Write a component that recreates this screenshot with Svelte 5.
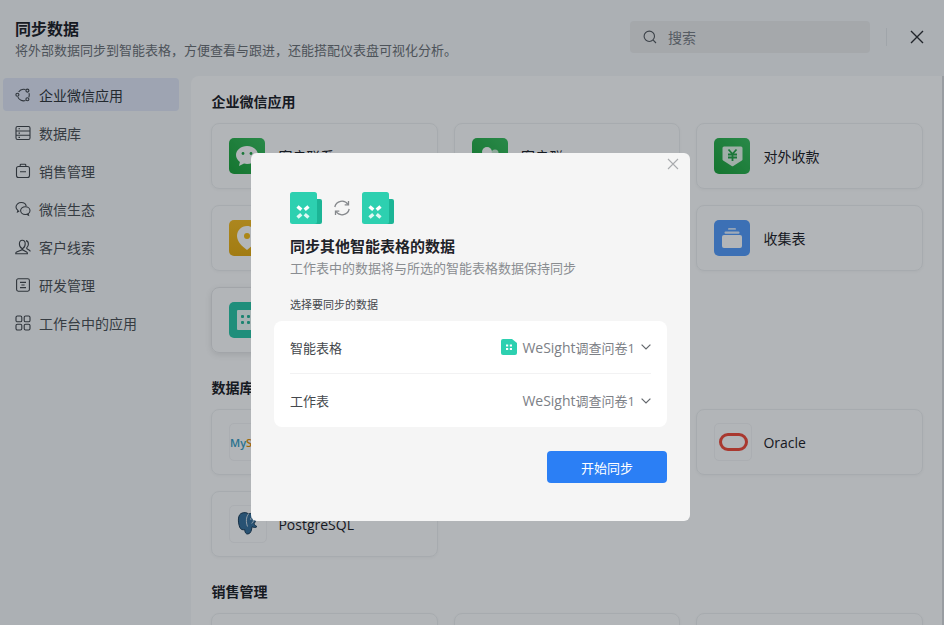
<script>
	const nav = [
		{ id: 'wecom', label: '企业微信应用', active: true },
		{ id: 'db', label: '数据库' },
		{ id: 'sales', label: '销售管理' },
		{ id: 'wechat', label: '微信生态' },
		{ id: 'leads', label: '客户线索' },
		{ id: 'dev', label: '研发管理' },
		{ id: 'apps', label: '工作台中的应用' }
	];
	// labels under the dialog are left out, they never show
	const wecom = [
		{ icon: 'chat', label: '客户联系' },
		{ icon: 'group', label: '客户群' },
		{ icon: 'pay', label: '对外收款' },
		{ icon: 'pin' },
		{ icon: 'none' },
		{ icon: 'form', label: '收集表' },
		{ icon: 'sheet', hot: true }
	];
	const dbs = [
		{ icon: 'mysql' },
		{ icon: 'none' },
		{ icon: 'oracle', label: 'Oracle' },
		{ icon: 'pg', label: 'PostgreSQL' }
	];
</script>

{#snippet sheetIcon()}
	<svg class="sheet" width="32" height="32" viewBox="0 0 32 32">
		<rect x="20" y="7" width="12" height="25" rx="2" fill="#1cb596" />
		<rect x="0" y="0" width="27" height="32" rx="2.5" fill="#2dd0b0" />
		<g fill="none" stroke="#fff" stroke-width="3.4">
			<path d="M7.500 14.500l3.800 3.300M18.500 14.500l-3.800 3.300" />
			<path d="M7.500 25.500l3.800-3.300M18.500 25.500l-3.800-3.300" opacity=".85" />
		</g>
	</svg>
{/snippet}

{#snippet navIcon(id)}
	<svg width="16" height="16" viewBox="0 0 16 16" fill="none" stroke="#44484d" stroke-width="1.1">
		{#if id === 'wecom'}
			<path d="M10.500 2.600A6 6 0 0 0 3.600 5M2.900 10.100a6 6 0 0 0 7.600 3.400M14 6.200a6 6 0 0 1-.1 4" />
			<circle cx="12.400" cy="3.600" r="1.500" /><circle cx="2.400" cy="7.800" r="1.500" /><circle cx="12.400" cy="12.200" r="1.500" />
		{:else if id === 'db'}
			<rect x="1" y="1.500" width="14" height="13" rx="1.500" />
			<path d="M1 6h14M1 10.200h14M3.500 3.800h1.500M3.500 8.100h1.500M3.500 12.400h1.500" />
		{:else if id === 'sales'}
			<rect x="1.500" y="3.500" width="13" height="11" rx="2" />
			<path d="M5.200 3.500V2a.8.8 0 0 1 .8-.8h4a.8.8 0 0 1 .8.8v1.500M5 8.800h6" />
		{:else if id === 'wechat'}
			<path d="M11.200 5.200C10.800 3 8.800 1.500 6.300 1.500 3.400 1.500 1 3.500 1 6c0 1.400.8 2.600 1.900 3.400l-.4 1.500 1.800-.9" />
			<ellipse cx="10.300" cy="9.600" rx="4.700" ry="3.900" />
			<path d="M13 12.600l.5 1.600-1.900-1" />
			<path d="M8.600 9.400h.1M11.800 9.400h.1" stroke-width="1.400" />
		{:else if id === 'leads'}
			<path d="M7 9.600c-1.700-.8-2.600-2.800-2.600-4.800C4.400 2.800 5.400 1.200 7.200 1.200s3 1.600 3 3.600c0 2-1 4-2.600 4.800v1.200l4 2.200c.5.3.8.7.8 1.300v.4H.8v-.4c0-.6.3-1 .8-1.300l5.400-2.200z" />
			<path d="M11 1.600c1.500.4 2.400 1.800 2.400 3.400 0 1.400-.6 2.800-1.600 3.600v1l2.600 1.600c.5.3.8.8.8 1.400" />
		{:else if id === 'dev'}
			<rect x="1.600" y="1.800" width="12.800" height="12.400" rx="1.600" />
			<path d="M5 5.400h6M6.400 8h3.200M5 10.600h6" />
		{:else}
			<rect x="1" y="1" width="5.800" height="5.800" rx="1.400" /><rect x="9.200" y="1" width="5.800" height="5.800" rx="1.400" />
			<rect x="1" y="9.200" width="5.800" height="5.800" rx="1.400" /><rect x="9.200" y="9.200" width="5.800" height="5.800" rx="1.400" />
		{/if}
	</svg>
{/snippet}

{#snippet appIcon(icon)}
	{#if icon === 'chat'}
		<div class="tile green">
			<svg width="26" height="24" viewBox="0 0 26 24">
				<path d="M13 2C6.900 2 2 6 2 11c0 2.800 1.500 5.200 3.900 6.900L5 22l5-2.400c1 .2 2 .4 3 .4 6.100 0 11-4 11-9s-4.900-9-11-9z" fill="#fff" />
				<circle cx="9" cy="9.500" r="1.400" fill="#27a74a" /><circle cx="17" cy="9.500" r="1.400" fill="#27a74a" />
			</svg>
		</div>
	{:else if icon === 'group'}
		<div class="tile green">
			<svg width="24" height="24" viewBox="0 0 24 24" fill="#fff">
				<circle cx="9" cy="8" r="5" /><path d="M1 21c0-5 3.500-7 8-7s8 2 8 7z" />
				<circle cx="17" cy="9" r="3.500" opacity=".75" /><path d="M18 14c3 0 5 2 5 6h-4c0-2-.4-4-1-6z" opacity=".75" />
			</svg>
		</div>
	{:else if icon === 'pay'}
		<div class="tile green">
			<svg width="21" height="21" viewBox="0 0 21 21">
				<path d="M2 .5h17a1.500 1.500 0 0 1 1.500 1.500v11.500a1 1 0 0 1-.6.9l-9 5.800a.8.8 0 0 1-.8 0l-9-5.800a1 1 0 0 1-.6-.9V2A1.500 1.500 0 0 1 2 .5z" fill="#fff" opacity=".88" />
				<path d="M6.500 3.500l4 4.500 4-4.500M6 8.500h9M6 11.500h9M10.500 8v7" fill="none" stroke="#27a74a" stroke-width="1.800" />
			</svg>
		</div>
	{:else if icon === 'pin'}
		<div class="tile yellow">
			<svg width="24" height="26" viewBox="0 0 24 26">
				<path d="M12 1C6 1 2 5.500 2 11c0 5.500 5 10.500 10 14 5-3.500 10-8.500 10-14C22 5.500 18 1 12 1z" fill="#fff" />
				<circle cx="12" cy="11" r="3" fill="#f6bd1a" />
			</svg>
		</div>
	{:else if icon === 'form'}
		<div class="tile blue">
			<svg width="20" height="20" viewBox="0 0 20 20" fill="#fff">
				<rect x="6" y="0" width="8" height="1.800" rx=".9" opacity=".75" />
				<rect x="2.500" y="3.500" width="15" height="2.200" rx="1" opacity=".85" />
				<rect x="0" y="7" width="20" height="13" rx="2" />
			</svg>
		</div>
	{:else if icon === 'sheet'}
		<div class="tile teal">
			<svg width="22" height="22" viewBox="0 0 22 22">
				<rect x="1" y="1" width="20" height="20" rx="1" fill="#fff" opacity=".92" />
				<g fill="#27b89a">
					<rect x="5" y="6" width="3" height="3" rx="1" /><rect x="11" y="6" width="3" height="3" rx="1" />
					<rect x="5" y="12" width="3" height="3" rx="1" /><rect x="11" y="12" width="3" height="3" rx="1" />
				</g>
			</svg>
		</div>
	{:else if icon === 'mysql'}
		<div class="tile logo"><span class="my">My</span><span class="sq">SQL</span></div>
	{:else if icon === 'oracle'}
		<div class="tile logo"><div class="ring"></div></div>
	{:else if icon === 'pg'}
		<div class="tile logo">
			<svg class="pg" width="24" height="26" viewBox="0 0 24 26">
				<path d="M6 2.500C9 1 12 1.500 13.500 3c3-1.300 6.500-.5 7.500 1.500 1 2.500-.3 6-1.800 8 .4 1.800 1.500 2.500 2.800 3-1 1.300-3.500 1.200-5 .2-.3 3-1 6.800-4 7.300-2.300.3-3.200-2-3.300-4.500-2 .8-4 0-5-2.300C3.500 13 2 5 6 2.500z" fill="#3a729c" stroke="#20405a" stroke-width="1" />
				<path d="M13.500 3c-2.500 3-2.700 8-1 12.500M16 6c2 .2 3 2 2.200 4.500-.3 1-1 1.600-1.700 1.800" fill="none" stroke="#e8eef3" stroke-width=".9" />
				<circle cx="15.800" cy="8" r=".8" fill="#e8eef3" />
			</svg>
		</div>
	{:else if icon === 'none'}
		<div class="tile logo"></div>
	{/if}
{/snippet}

<div class="page">
	<header class="top">
		<div class="intro">
			<h1>同步数据</h1>
			<p>将外部数据同步到智能表格，方便查看与跟进，还能搭配仪表盘可视化分析。</p>
		</div>
		<div class="search">
			<svg width="14" height="14" viewBox="0 0 14 14" fill="none" stroke="#565a5f" stroke-width="1.100">
				<circle cx="6.300" cy="6.300" r="5.200" /><path d="M10.200 10.200l2.800 2.800" />
			</svg>
			<span>搜索</span>
		</div>
		<div class="sep"></div>
		<svg class="close" width="14" height="14" viewBox="0 0 14 14" stroke="#2e3135" stroke-width="1.400">
			<path d="M1 1l12 12M13 1L1 13" />
		</svg>
	</header>

	<div class="body">
		<nav class="side">
			{#each nav as item}
				<div class="item" class:active={item.active}>
					{@render navIcon(item.id)}
					<span>{item.label}</span>
				</div>
			{/each}
		</nav>

		<main class="panel">
			<h2>企业微信应用</h2>
			<div class="grid">
				{#each wecom as app}
					<div class="card" class:hot={app.hot}>
						{@render appIcon(app.icon)}
						{#if app.label}<span>{app.label}</span>{/if}
					</div>
				{/each}
			</div>
			<h2>数据库</h2>
			<div class="grid">
				{#each dbs as app}
					<div class="card">
						{@render appIcon(app.icon)}
						{#if app.label}<span>{app.label}</span>{/if}
					</div>
				{/each}
			</div>
			<h2>销售管理</h2>
			<div class="grid">
				<div class="card"></div>
				<div class="card"></div>
				<div class="card"></div>
			</div>
		</main>
	</div>

	<div class="overlay">
		<div class="modal">
			<svg class="modal-close" width="12" height="12" viewBox="0 0 12 12" stroke="#a9abae" stroke-width="1.100">
				<path d="M1 1l10 10M11 1L1 11" />
			</svg>
			<div class="sync-icons">
				{@render sheetIcon()}
				<svg width="18" height="18" viewBox="0 0 18 18" fill="none" stroke="#85888c" stroke-width="1.300">
					<path d="M1.800 8A7.300 7.300 0 0 1 15 5.500M16.200 10A7.300 7.300 0 0 1 3 12.500" />
					<path d="M15.500 2v3.800h-3.800M2.500 16v-3.800h3.800" />
				</svg>
				{@render sheetIcon()}
			</div>
			<h3>同步其他智能表格的数据</h3>
			<p class="sub">工作表中的数据将与所选的智能表格数据保持同步</p>
			<div class="label">选择要同步的数据</div>
			<div class="form">
				<div class="row">
					<span>智能表格</span>
					<div class="value">
						<svg width="16" height="16" viewBox="0 0 16 16">
							<path d="M2 0h9l5 4v10a2 2 0 0 1-2 2H2a2 2 0 0 1-2-2V2a2 2 0 0 1 2-2z" fill="#2dd0b0" />
							<g fill="#fff"><rect x="5" y="5.500" width="2.200" height="2" /><rect x="8.800" y="5.500" width="2.200" height="2" /><rect x="5" y="9" width="2.200" height="2" /><rect x="8.800" y="9" width="2.200" height="2" /></g>
						</svg>
						<span><span class="latin">WeSight</span>调查问卷1</span>
						<svg width="10" height="6" viewBox="0 0 10 6" fill="none" stroke="#63676c" stroke-width="1.200"><path d="M.6.600L5 5l4.400-4.400" /></svg>
					</div>
				</div>
				<div class="row">
					<span>工作表</span>
					<div class="value">
						<span><span class="latin">WeSight</span>调查问卷1</span>
						<svg width="10" height="6" viewBox="0 0 10 6" fill="none" stroke="#63676c" stroke-width="1.200"><path d="M.6.600L5 5l4.400-4.400" /></svg>
					</div>
				</div>
			</div>
			<div class="actions">
				<button>开始同步</button>
			</div>
		</div>
	</div>
</div>

<style>
	:global(body) {
		margin: 0;
		font-family: "Open Sans", "Noto Sans CJK SC", sans-serif;
	}
	.page {
		position: relative;
		height: 625px;
		overflow: hidden;
		background: #f7f8fa;
		color: #1f2329;
	}
	.top {
		height: 76px;
		box-sizing: border-box;
		display: flex;
		align-items: flex-start;
		padding: 20px 20px 0 15px;
	}
	.intro {
		flex: 1;
	}
	h1 {
		margin: 0;
		font-size: 16px;
		line-height: 18px;
		font-weight: 700;
	}
	.intro p {
		margin: 3px 0 0;
		font-size: 13px;
		line-height: 18px;
		color: #6f7378;
	}
	.search {
		width: 240px;
		height: 32px;
		margin-top: 1px;
		background: #ececed;
		border-radius: 4px;
		display: flex;
		align-items: center;
		gap: 11px;
		padding-left: 13px;
		box-sizing: border-box;
		font-size: 14px;
		color: #7c8086;
	}
	.sep {
		width: 1px;
		height: 18px;
		background: #e6e8eb;
		margin: 8px 23px 0 16px;
	}
	.close {
		margin-top: 10px;
	}
	.body {
		display: flex;
		height: 549px;
	}
	.side {
		width: 191px;
		flex: none;
		box-sizing: border-box;
		padding: 2px 12px 0 3px;
		display: flex;
		flex-direction: column;
		gap: 5px;
	}
	.item {
		height: 33px;
		display: flex;
		align-items: center;
		gap: 8px;
		padding-left: 12px;
		border-radius: 4px;
		font-size: 14px;
		color: #4e5257;
	}
	.item.active {
		background: #e2e7f7;
		color: #33373c;
	}
	.panel {
		flex: 1;
		background: #fff;
		border-top-left-radius: 8px;
		border-right: 2px solid #dcdde0;
		padding: 17px 20px 0 20.4px;
		min-width: 0;
	}
	h2 {
		margin: 0 0 12px;
		font-size: 14px;
		line-height: 18px;
		font-weight: 700;
	}
	.grid {
		display: grid;
		grid-template-columns: repeat(3, 226.5px);
		grid-auto-rows: 66px;
		gap: 16px;
		margin-bottom: 26px;
	}
	.card {
		display: flex;
		align-items: center;
		gap: 13px;
		padding-left: 17px;
		border: 1px solid #f0f1f2;
		border-radius: 8px;
		box-shadow: 0 1px 3px rgba(0, 0, 0, 0.04);
		font-size: 14px;
		color: #1f2329;
		box-sizing: border-box;
	}
	.card.hot {
		border-color: #e8e9ea;
		box-shadow: 0 2px 6px rgba(0, 0, 0, 0.1);
	}
	.tile {
		width: 36px;
		height: 36px;
		flex: none;
		border-radius: 5px;
		display: flex;
		align-items: center;
		justify-content: center;
	}
	.green {
		background: linear-gradient(45deg, #1ea43c, #3cc060);
	}
	.yellow {
		background: linear-gradient(180deg, #f7bd24, #e8ad12);
	}
	.blue {
		background: #569dfb;
	}
	.teal {
		background: #2dc8a8;
	}
	.logo {
		width: 38px;
		height: 38px;
		margin-right: -2px;
		border: 1px solid #f5f5f6;
		box-sizing: border-box;
		font-size: 11px;
		font-weight: 600;
	}
	.my {
		color: #3aa0c4;
	}
	.sq {
		color: #e48e00;
	}
	.ring {
		width: 29px;
		height: 18px;
		box-sizing: border-box;
		border: 3.5px solid #f24c3c;
		border-radius: 9px;
	}
	.pg {
		margin-left: -2px;
	}
	.overlay {
		position: absolute;
		inset: 0;
		background: rgba(0, 10, 20, 0.3);
		padding: 153px 0 0 251px;
		box-sizing: border-box;
	}
	.modal {
		position: relative;
		width: 439px;
		height: 368px;
		box-sizing: border-box;
		background: #f5f5f5;
		border-radius: 6px;
		padding: 39px 23px 0;
	}
	.modal-close {
		position: absolute;
		top: 5px;
		right: 11px;
	}
	.sync-icons {
		display: flex;
		align-items: center;
		gap: 11px;
		padding-left: 16px;
		height: 32px;
	}
	.sheet {
		flex: none;
	}
	h3 {
		margin: 12px 0 0 16px;
		font-size: 15px;
		line-height: 20px;
		font-weight: 700;
		color: #1f2329;
	}
	.sub {
		margin: 2px 0 0 16px;
		font-size: 13px;
		line-height: 20px;
		color: #8a8d91;
	}
	.label {
		margin: 19px 0 0 16px;
		font-size: 11px;
		line-height: 16px;
		color: #44484d;
	}
	.form {
		margin-top: 8px;
		width: 393px;
		background: #fff;
		border-radius: 8px;
		padding: 0 16px;
		box-sizing: border-box;
	}
	.row {
		height: 52px;
		box-sizing: border-box;
		display: flex;
		align-items: center;
		justify-content: space-between;
		font-size: 13px;
		color: #44484d;
	}
	.row + .row {
		height: 54px;
		border-top: 1px solid #f2f2f3;
	}
	.value {
		display: flex;
		align-items: center;
		gap: 5px;
		color: #7c8086;
	}
	.latin {
		font-size: 14px;
	}
	.value svg:last-child {
		margin-left: 1px;
	}
	.actions {
		display: flex;
		justify-content: flex-end;
		width: 393px;
		margin-top: 24px;
	}
	button {
		width: 120px;
		height: 32px;
		border: none;
		border-radius: 4px;
		background: #2b7ff5;
		color: #fff;
		font: inherit;
		font-size: 13px;
	}
</style>
